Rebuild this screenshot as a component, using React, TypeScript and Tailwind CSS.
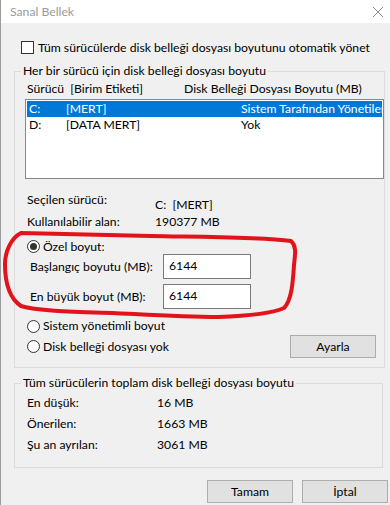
import React from "react";

const drives = [
  { letter: "C:", label: "[MERT]", size: "Sistem Tarafından Yönetilen", selected: true },
  { letter: "D:", label: "[DATA MERT]", size: "Yok", selected: false },
];

const totals = [
  { label: "En düşük:", value: "16 MB" },
  { label: "Önerilen:", value: "1663 MB" },
  { label: "Şu an ayrılan:", value: "3061 MB" },
];

function Radio({ checked }: { checked?: boolean }) {
  return (
    <span className="flex h-[13px] w-[13px] shrink-0 items-center justify-center rounded-full border border-[#333] bg-white">
      {checked ? <span className="h-[7px] w-[7px] rounded-full bg-[#333]" /> : null}
    </span>
  );
}

function Button({ children }: { children: React.ReactNode }) {
  return (
    <button
      type="button"
      className="flex h-[23px] w-[86px] items-center justify-center border border-[#adadad] bg-[#e1e1e1] text-black"
    >
      {children}
    </button>
  );
}

function SizeField({ label, value, className = "" }: { label: string; value: string; className?: string }) {
  return (
    <div className={"flex items-center pl-[15px] " + className}>
      <span className="w-[133px] shrink-0">{label}</span>
      <div className="h-[25px] w-[88px] border border-[#7a7a7a] bg-white pl-[5px] pt-[3px]">{value}</div>
    </div>
  );
}

export default function App() {
  return (
    <div className="relative h-[505px] w-[390px] overflow-hidden border-l border-[#9b9b9b] bg-[#f0f0f0] font-['Lato',sans-serif] text-[12.2px] leading-[16px] text-black">
      {/* title bar */}
      <div className="flex h-[23px] items-center justify-between bg-white pl-[9px] pr-[4px] text-[#9a9a9a]">
        <span>Sanal Bellek</span>
        <svg width="12" height="12" viewBox="0 0 12 12" className="mr-[2px]">
          <path d="M1 1 L11 11 M11 1 L1 11" stroke="#8a8a8a" strokeWidth="1" />
        </svg>
      </div>

      <label className="ml-[20px] mt-[18px] flex h-[13px] items-center gap-[4px] whitespace-nowrap">
        <span className="h-[13px] w-[13px] shrink-0 border border-[#333] bg-white" />
        <span>Tüm sürücülerde disk belleği dosyası boyutunu otomatik yönet</span>
      </label>

      <fieldset className="ml-[13px] mt-[9px] w-[369px] border border-[#dcdcdc] pb-[9px]">
        <legend className="ml-[6px] px-[2px]">Her bir sürücü için disk belleği dosyası boyutu</legend>

        <div className="mt-[2px] flex pl-[12px]">
          <span className="w-[157px] shrink-0 whitespace-pre">Sürücü  [Birim Etiketi]</span>
          <span>Disk Belleği Dosyası Boyutu (MB)</span>
        </div>

        <div className="ml-[10px] mt-[2px] h-[80px] w-[359px] overflow-hidden border border-[#828790] bg-white px-[1px] pt-[1px]">
          {drives.map((d) => (
            <div
              key={d.letter}
              className={
                "flex h-[16px] items-center whitespace-nowrap pl-[2px] " +
                (d.selected ? "bg-[#0078d7] text-white" : "")
              }
            >
              <span className="w-[37px] shrink-0">{d.letter}</span>
              <span className="w-[175px] shrink-0">{d.label}</span>
              <span className="shrink-0">{d.size}</span>
            </div>
          ))}
        </div>

        <div className="mt-[13px] flex h-[22px] pl-[12px]">
          <span className="w-[128px] shrink-0">Seçilen sürücü:</span>
          <span className="whitespace-pre pt-[5px]">C:  [MERT]</span>
        </div>
        <div className="flex pl-[12px]">
          <span className="w-[128px] shrink-0">Kullanılabilir alan:</span>
          <span>190377 MB</span>
        </div>

        <div className="mt-[9px] flex h-[15px] items-center gap-[3px] pl-[12px]">
          <Radio checked />
          <span>Özel boyut:</span>
        </div>
        <SizeField label="Başlangıç boyutu (MB):" value="6144" />
        <SizeField label="En büyük boyut (MB):" value="6144" className="mt-[5px]" />

        <div className="mt-[9px] flex h-[16px] items-center gap-[3px] pl-[12px]">
          <Radio />
          <span>Sistem yönetimli boyut</span>
        </div>
        <div className="mt-[1px] flex items-center pl-[12px] pr-[8px]">
          <Radio />
          <span className="ml-[3px]">Disk belleği dosyası yok</span>
          <span className="ml-auto">
            <Button>Ayarla</Button>
          </span>
        </div>
      </fieldset>

      <fieldset className="ml-[13px] mt-[7px] w-[369px] border border-[#dcdcdc] pb-[9px]">
        <legend className="ml-[6px] px-[2px]">Tüm sürücülerin toplam disk belleği dosyası boyutu</legend>
        <div className="mt-[4px]">
          {totals.map((t) => (
            <div key={t.label} className="flex h-[21px] pl-[12px]">
              <span className="w-[130px] shrink-0">{t.label}</span>
              <span>{t.value}</span>
            </div>
          ))}
        </div>
      </fieldset>

      <div className="mt-[12px] flex justify-end gap-[9px] pr-[2px]">
        <Button>Tamam</Button>
        <Button>İptal</Button>
      </div>

      {/* hand-drawn red annotation */}
      <svg className="pointer-events-none absolute left-0 top-0" width="390" height="505" viewBox="0 0 390 505">
        <path
          d="M20,233 C10,238 4,252 4,264 C4,282 8,298 20,306 C40,312 90,312 133,314 C170,316 200,317 217,317 C245,316 270,314 283,308 C291,300 292,280 293,265 C294,255 296,246 290,241 C260,237 200,237 150,236 C100,235 60,234 20,233"
          fill="none"
          stroke="#e3131b"
          strokeWidth="4"
          strokeLinecap="round"
          strokeLinejoin="round"
        />
      </svg>
    </div>
  );
}
